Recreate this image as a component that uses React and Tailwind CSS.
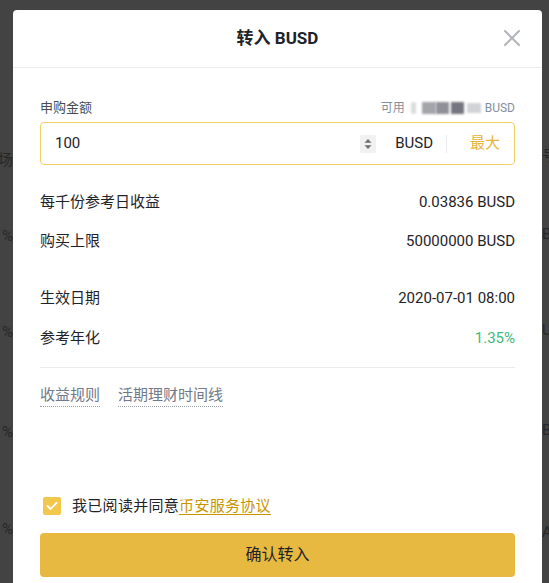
import React from "react";

function Stepper() {
  return (
    <div className="flex h-[18px] w-[16px] items-center justify-center rounded-[2px] bg-[#f1f1f2]">
      <svg width="8" height="12" viewBox="0 0 8 12">
        <path d="M4 1 L7.5 4.8 H0.5 Z" fill="#6b6f76" />
        <path d="M4 11 L7.5 7.2 H0.5 Z" fill="#6b6f76" />
      </svg>
    </div>
  );
}

function Row({ label, value, valueClass = "text-[#1e2329]", className = "" }) {
  return (
    <div className={`flex h-[22px] items-center justify-between text-[15px] leading-[22px] ${className}`}>
      <span className="text-[#1e2329]">{label}</span>
      <span className={valueClass}>{value}</span>
    </div>
  );
}

export default function App() {
  return (
    <div className="flex h-[583px] w-full overflow-hidden bg-[#434343] font-['Roboto','Noto_Sans_CJK_SC',sans-serif]">
      {/* dimmed page behind the modal */}
      <div className="flex w-[13px] shrink-0 flex-col items-end overflow-hidden text-[15px] leading-[20px] text-[#272727]">
        <span className="mt-[150px] whitespace-nowrap">市场</span>
        <span className="mt-[56px] whitespace-nowrap">%</span>
        <span className="mt-[76px] whitespace-nowrap">%</span>
        <span className="mt-[80px] whitespace-nowrap">%</span>
        <span className="mt-[77px] whitespace-nowrap">%</span>
      </div>

      <div className="mt-[10px] flex w-[529px] shrink-0 flex-col rounded-t-[4px] bg-white">
        {/* header */}
        <div className="relative flex h-[58px] items-center justify-center border-b border-[#eaecef]">
          <span className="text-[17px] font-bold text-[#1e2329]">转入 BUSD</span>
          <svg
            className="absolute right-[22px] top-[20px]"
            width="16"
            height="16"
            viewBox="0 0 16 16"
          >
            <path d="M1 1 L15 15 M15 1 L1 15" stroke="#b1b5bb" strokeWidth="2" strokeLinecap="round" />
          </svg>
        </div>

        <div className="flex flex-col px-[27px]">
          {/* amount */}
          <div className="mt-[31px] flex h-[18px] items-center justify-between">
            <span className="text-[13px] text-[#474d57]">申购金额</span>
            <span className="flex items-center text-[12px] text-[#848e9c]">
              可用
              <span className="ml-[6px] inline-block h-[12px] w-[5px] rounded-[2px] bg-[#dcdcdf] blur-[1px]" />
              <span className="ml-[6px] inline-block h-[12px] w-[14px] bg-[#a4a5ab] blur-[0.8px]" />
              <span className="inline-block h-[12px] w-[13px] bg-[#8f9098] blur-[0.8px]" />
              <span className="ml-[2px] inline-block h-[12px] w-[13px] bg-[#74757f] blur-[0.8px]" />
              <span className="ml-[3px] inline-block h-[10px] w-[14px] bg-[#d2d3d7] blur-[1px]" />
              <span className="ml-[4px]">BUSD</span>
            </span>
          </div>

          <div className="mt-[5px] flex h-[43px] items-center rounded-[4px] border border-[#efcf68] pl-[14px] pr-[14px]">
            <span className="flex-1 text-[15px] text-[#1e2329]">100</span>
            <Stepper />
            <span className="ml-[19px] text-[15px] text-[#1e2329]">BUSD</span>
            <span className="ml-[13px] h-[18px] w-px bg-[#eaecef]" />
            <span className="ml-[23px] text-[15px] text-[#e7b43a]">最大</span>
          </div>

          {/* details */}
          <Row className="mt-[26px]" label="每千份参考日收益" value="0.03836 BUSD" />
          <Row className="mt-[17px]" label="购买上限" value="50000000 BUSD" />
          <Row className="mt-[35px]" label="生效日期" value="2020-07-01 08:00" />
          <Row className="mt-[18px]" label="参考年化" value="1.35%" valueClass="text-[#3dba7e]" />

          <div className="mt-[18px] h-px bg-[#eaecef]" />

          <div className="mt-[17px] flex gap-[18px] text-[15px] text-[#707a8a]">
            <span className="border-b border-dotted border-[#9aa0a8] leading-[21px]">收益规则</span>
            <span className="border-b border-dotted border-[#9aa0a8] leading-[21px]">活期理财时间线</span>
          </div>

          {/* agreement */}
          <div className="mt-[88px] flex h-[22px] items-center">
            <span className="ml-[3px] flex h-[18px] w-[18px] items-center justify-center rounded-[2px] bg-[#f1c84b]">
              <svg width="12" height="10" viewBox="0 0 12 10">
                <path d="M1.5 5 L4.6 8 L10.5 1.8" fill="none" stroke="#ffffff" strokeWidth="1.8" strokeLinecap="round" strokeLinejoin="round" />
              </svg>
            </span>
            <span className="ml-[11px] text-[15px] tracking-[0.3px] text-[#1e2329]">
              我已阅读并同意
              <span className="text-[#c99400] underline underline-offset-[3px]">币安服务协议</span>
            </span>
          </div>

          <button className="mt-[16px] flex h-[44px] items-center justify-center rounded-[4px] bg-[#e8b940] text-[16px] text-[#1e2329]">
            确认转入
          </button>
        </div>
      </div>

      <div className="flex w-[7px] shrink-0 flex-col overflow-hidden text-[15px] leading-[20px] text-[#272727]">
        <span className="mt-[146px] whitespace-nowrap">号</span>
        <span className="mt-[58px] whitespace-nowrap">B</span>
        <span className="mt-[76px] whitespace-nowrap">U</span>
        <span className="mt-[80px] whitespace-nowrap">B</span>
        <span className="mt-[82px] whitespace-nowrap">A</span>
      </div>
    </div>
  );
}
